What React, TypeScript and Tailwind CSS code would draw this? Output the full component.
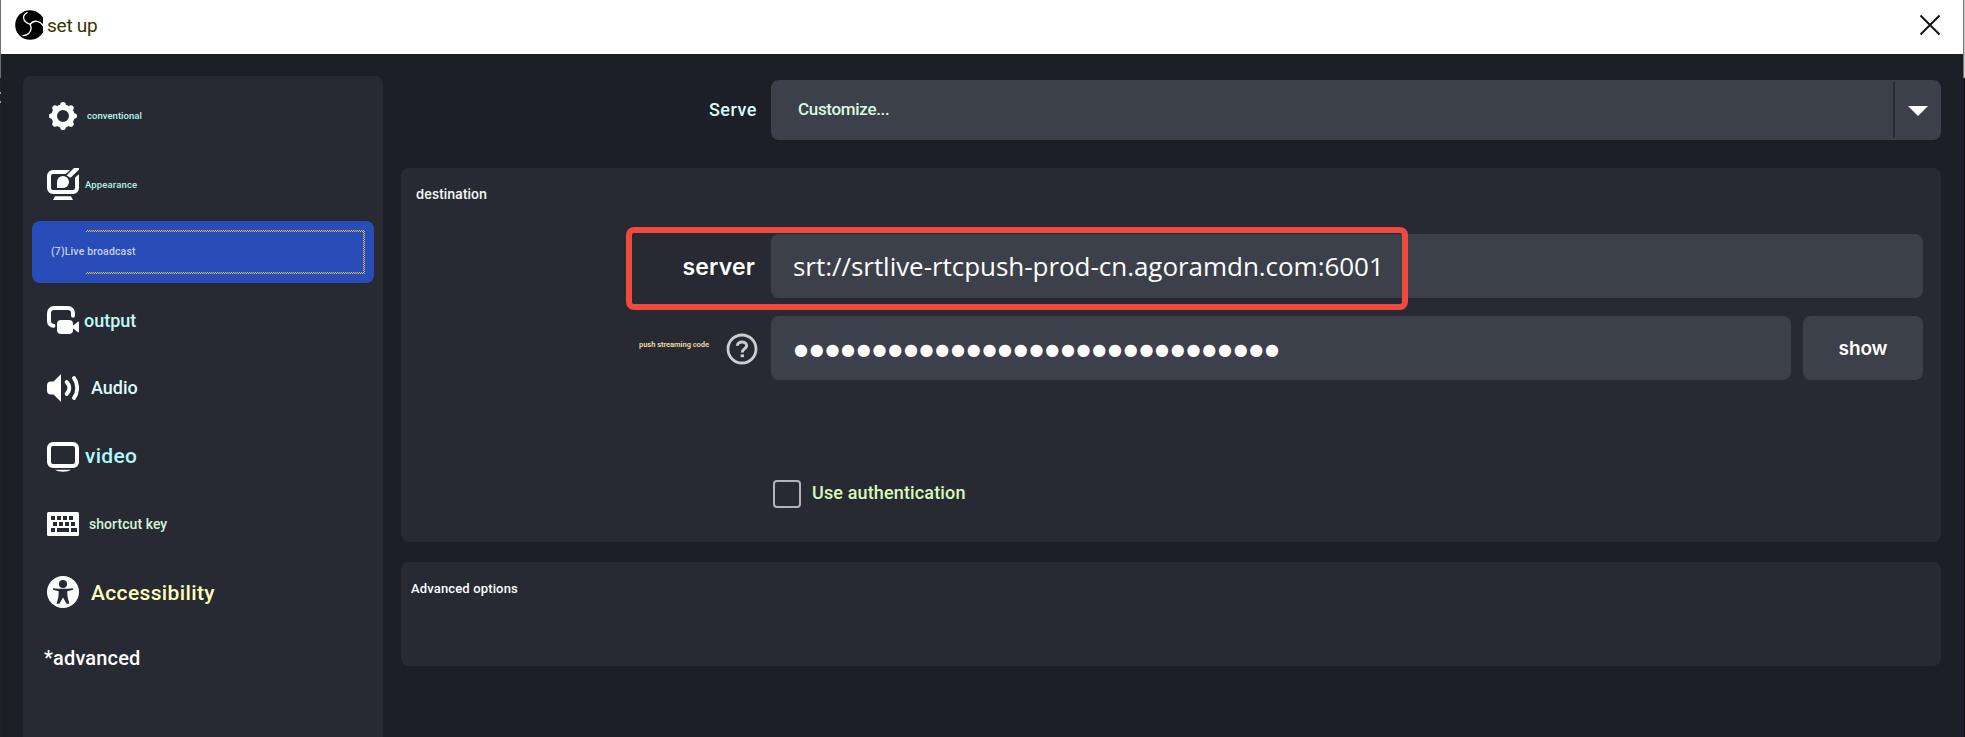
import type { ReactNode } from "react";
import clsx from "clsx";

const ROBOTO = "font-['Roboto','Liberation_Sans',sans-serif]";
const INTER = "font-['Inter','Liberation_Sans',sans-serif]";

function ObsLogo() {
  return (
    <svg width="28" height="30" viewBox="0 0 28 30" className="shrink-0">
      <circle cx="15" cy="15" r="14.8" fill="#000" />
      <g fill="none" stroke="#fff" strokeWidth="1.3" strokeLinecap="round">
        <path d="M12.2 2.6C8.6 4 7.6 7.6 9.4 10.6C10.7 12.8 13 13.6 15.2 14.4" />
        <path d="M15.2 14.4C17 11.8 20 10.8 23 11.6C25.4 12.2 27 13.8 28 15.6" />
        <path d="M15.2 14.4C16.4 17 16.2 20.2 14.4 22.6C12.8 24.6 10.6 25.6 8 25.6" />
      </g>
    </svg>
  );
}

function GearIcon() {
  return (
    <svg width="32" height="32" viewBox="0 0 32 32">
      <g fill="none" stroke="#fff" strokeWidth="5.6">
        <circle cx="16" cy="16" r="8.8" />
        <path
          strokeLinecap="round"
          d="M16 4.8v1M16 27.2v-1M4.8 16h1M27.2 16h-1M8.1 8.1l.7.7M23.9 23.9l-.7-.7M8.1 23.9l.7-.7M23.9 8.1l-.7.7"
        />
      </g>
    </svg>
  );
}

function AppearanceIcon() {
  return (
    <svg width="32" height="32" viewBox="0 0 32 32">
      <rect x="2" y="4" width="28" height="20" rx="4" fill="none" stroke="#fff" strokeWidth="4" />
      <path d="M34-2L19 12" stroke="#272a33" strokeWidth="9" />
      <path d="M27 0H32V1.5L23.6 9.8L19.6 7.4Z" fill="#fff" />
      <path d="M10 20V14a6 6 0 1 1 6 6Z" fill="#fff" />
      <path d="M8 28.2H24L26 32H6Z" fill="#fff" />
    </svg>
  );
}

function OutputIcon() {
  return (
    <svg width="32" height="28" viewBox="0 0 32 28">
      <path
        d="M6.4 19.8A4.6 4.6 0 0 1 2 15.2V7A5 5 0 0 1 7 2H21A5 5 0 0 1 26 7V9.8"
        fill="none"
        stroke="#fff"
        strokeWidth="4"
        strokeLinecap="round"
      />
      <rect x="10" y="14" width="16" height="14" rx="4" fill="#fff" />
      <path d="M25.5 20L31 15.8H32V26.2H31L25.5 22Z" fill="#fff" />
    </svg>
  );
}

function AudioIcon() {
  return (
    <svg width="32" height="28" viewBox="0 0 32 28">
      <path d="M14 0V28L6.6 20.4H4A4 4 0 0 1 0 16.4V11.6A4 4 0 0 1 4 7.6H6.6Z" fill="#fff" />
      <g fill="none" stroke="#fff" strokeWidth="3.8" strokeLinecap="round">
        <path d="M19.6 8C23.2 11.4 23.2 16.6 19.6 20" />
        <path d="M27 4C31.2 9.6 31.2 18.4 27 24" />
      </g>
    </svg>
  );
}

function VideoIcon() {
  return (
    <svg width="32" height="30" viewBox="0 0 32 30" className="mt-0.5">
      <rect x="2" y="2" width="28" height="22" rx="4" fill="none" stroke="#fff" strokeWidth="4" />
      <path d="M8 27.8H24C21 30.4 11 30.4 8 27.8Z" fill="#fff" />
    </svg>
  );
}

function KeyboardIcon() {
  return (
    <svg width="32" height="24" viewBox="0 0 32 24">
      <rect width="32" height="24" rx="1.5" fill="#fff" />
      <path
        fill="#272a33"
        d="M4 4h4v4H4zM10 4h4v4h-4zM16 4h4v4h-4zM22 4h4v4h-4zM6 10h4v4H6zM12 10h4v4h-4zM18 10h4v4h-4zM24 10h4v4h-4zM4 16h4v4H4zM10 16h12v4H10zM24 16h6v4h-6z"
      />
    </svg>
  );
}

function AccessibilityIcon() {
  return (
    <svg width="32" height="32" viewBox="0 0 32 32">
      <circle cx="16" cy="16" r="16" fill="#fff" />
      <g fill="#272a33">
        <circle cx="16" cy="8" r="4" />
        <path d="M6 12.2Q16 13.4 26 12.2V13.8L20.2 15.2L20.6 21L22.4 27.8H19.6L16 21.6L12.4 27.8H9.6L11.4 21L11.8 15.2L6 13.8Z" />
      </g>
    </svg>
  );
}

type NavRow = { label: string; icon: ReactNode; text: string };

const before: NavRow[] = [
  { label: "conventional", icon: <GearIcon />, text: "pl-2 text-[9.5px] tracking-[0.04px] text-[#b4f6f0]" },
  { label: "Appearance", icon: <AppearanceIcon />, text: "pl-1.5 pt-0.5 text-[9.5px] tracking-[0.15px] text-[#b4f0ea]" },
];

const after: NavRow[] = [
  { label: "output", icon: <OutputIcon />, text: "pl-[5px] pt-0.5 text-[18px] text-[#c2fbf6]" },
  { label: "Audio", icon: <AudioIcon />, text: "pl-3 text-[18px] text-[#dcfbf8]" },
  { label: "video", icon: <VideoIcon />, text: "pl-1.5 text-[21px] tracking-[0.29px] text-[#b0fafa]" },
  { label: "shortcut key", icon: <KeyboardIcon />, text: "pl-2.5 text-[14px] tracking-[0.06px] text-[#d2f4d4]" },
  { label: "Accessibility", icon: <AccessibilityIcon />, text: "pl-3 pt-0.5 text-[21px] tracking-[0.36px] text-[#ffffbc]" },
];

function NavItem({ label, icon, text }: NavRow) {
  return (
    <li className="flex h-[68px] items-center pl-[15px]">
      <span className="flex w-8 justify-center">{icon}</span>
      <span className={clsx("font-medium leading-none whitespace-nowrap", text)}>{label}</span>
    </li>
  );
}

function Sidebar() {
  return (
    <nav className="w-[360px] shrink-0 rounded-t-lg bg-[#272a33] px-[9px] pt-1.5">
      <ul>
        {before.map((row) => (
          <NavItem key={row.label} {...row} />
        ))}
        <li className="flex h-[68px] items-center">
          <div className="relative flex h-[62px] w-full items-center rounded-lg bg-[#284cb8] pl-[19px]">
            <div className="absolute top-[9px] right-[9px] bottom-[9px] left-[54px] bg-[repeating-conic-gradient(#e6bd3c_0_25%,#284cb8_0_50%)] bg-[length:2px_2px] py-0.5 pr-0.5">
              <div className="h-full w-full bg-[#284cb8]" />
            </div>
            <span className="relative text-[10.5px] leading-none font-medium tracking-[0.15px] text-[#c6d0f2]">
              (7)Live broadcast
            </span>
          </div>
        </li>
        {after.map((row) => (
          <NavItem key={row.label} {...row} />
        ))}
        <li className="flex h-[68px] items-center pb-1 pl-3 text-[20px] leading-none font-medium tracking-[0.16px] text-white">
          *advanced
        </li>
      </ul>
    </nav>
  );
}

function ServiceRow() {
  return (
    <div className="flex h-[60px] items-center">
      <div className="w-[370px] shrink-0 pr-3.5 text-right text-[18px] leading-none font-medium tracking-[0.5px] text-[#d8fbfb]">
        Serve
      </div>
      <div className="flex h-full flex-1 items-center rounded-lg bg-[#3c404b] py-0.5">
        <span className="flex-1 pb-0.5 pl-[27px] text-[17px] leading-none font-medium tracking-[-0.32px] text-[#dbf9de]">
          Customize...
        </span>
        <div className="flex h-full w-12 items-center justify-center border-l-2 border-[#272a33] pt-0.5">
          <svg width="20" height="10" viewBox="0 0 20 10">
            <path d="M0 0H20L10 10Z" fill="#fff" />
          </svg>
        </div>
      </div>
    </div>
  );
}

function HelpIcon() {
  return (
    <svg width="32" height="32" viewBox="0 0 32 32" className="mt-0.5 shrink-0">
      <g fill="none" stroke="#cdcdcf">
        <circle cx="16" cy="16" r="14" strokeWidth="2.8" />
        <path d="M11.4 12.8C11.4 7.8 20.6 7.8 20.6 12.8C20.6 15.6 16.3 15.8 16.3 19.4" strokeWidth="3" />
      </g>
      <rect x="14.6" y="21.4" width="3.4" height="2.8" fill="#cdcdcf" />
    </svg>
  );
}

function Destination() {
  return (
    <section className="mt-7 h-[374px] rounded-lg bg-[#272a33] pr-[18px]">
      <h2 className={clsx(INTER, "h-[66px] pt-[19px] pl-[15px] text-[13px] leading-[14px] font-semibold tracking-[0.08px] text-[#f2f5f4]")}>
        destination
      </h2>
      <div className="relative flex h-16 items-center">
        <div className={clsx(INTER, "w-[370px] shrink-0 pt-0.5 pr-4 text-right text-[23px] leading-none font-semibold tracking-[0.15px] text-white")}>
          server
        </div>
        <div className="flex h-full flex-1 items-center rounded-lg bg-[#3c404b] pl-[22px] font-['Open_Sans',sans-serif] text-[26px] leading-none tracking-[-0.04px] whitespace-nowrap text-white">
          srt://srtlive-rtcpush-prod-cn.agoramdn.com:6001
        </div>
        <div className="absolute -top-[7px] left-[225px] h-[83px] w-[782px] rounded-lg border-[6px] border-[#f04a3e]" />
      </div>
      <div className="mt-[18px] flex h-16 items-center">
        <div className="flex w-[370px] shrink-0 items-center justify-end gap-[17px] pr-[13px]">
          <span className="pb-[6px] text-[7.5px] leading-none font-semibold tracking-[-0.03px] text-[#f3dfa2]">
            push streaming code
          </span>
          <HelpIcon />
        </div>
        <div className="flex h-full flex-1 items-center rounded-lg bg-[#3c404b] pt-[3px] pl-[23px] font-['DejaVu_Sans',sans-serif] text-[16px] leading-none tracking-[1.74px] whitespace-nowrap text-white">
          ●●●●●●●●●●●●●●●●●●●●●●●●●●●●●●●
        </div>
        <button className={clsx(INTER, "ml-3 h-full w-[120px] rounded-lg bg-[#3c404b] text-[19px] leading-none font-semibold tracking-[-0.12px] text-white")}>
          show
        </button>
      </div>
      <label className="mt-[100px] flex h-7 items-center pl-[372px]">
        <span className="size-7 rounded-[4px] border-2 border-[#b4b4b8]" />
        <span className="pb-0.5 pl-[11px] text-[18px] leading-none font-medium tracking-[0.14px] text-[#d9f9ba]">Use authentication</span>
      </label>
    </section>
  );
}

export default function App() {
  return (
    <div className={clsx(ROBOTO, "flex h-[737px] w-[1965px] overflow-hidden bg-[#1d1f26]")}>
      <div className="w-px shrink-0 bg-[#1f2326]">
        <div className="h-[78px] bg-[#707070]" />
        <div className="mt-3.5 h-0.5 bg-[#a0a0a0]" />
        <div className="mt-[7px] h-0.5 bg-[#a0a0a0]" />
      </div>
      <main className="flex min-w-0 flex-1 flex-col">
        <header className="flex h-[54px] shrink-0 items-center bg-white pr-[22px] pl-3.5">
          <div className="pb-1">
            <ObsLogo />
          </div>
          <h1 className="flex-1 pb-1 pl-1 text-[19px] leading-none tracking-[-0.25px] text-[#363600]">set up</h1>
          <svg width="22" height="22" viewBox="0 0 22 22" className="mb-1">
            <path d="M1.5 1.5L20.5 20.5M20.5 1.5L1.5 20.5" stroke="#111" strokeWidth="1.9" />
          </svg>
        </header>
        <div className="flex min-h-0 flex-1 pt-[22px] pr-[22px] pl-[22px]">
          <Sidebar />
          <div className="ml-[18px] flex-1 pt-1">
            <ServiceRow />
            <Destination />
            <section className="mt-5 h-[104px] rounded-lg bg-[#272a33] pt-5 pl-2.5 text-[13px] leading-[14px] font-medium tracking-[0.15px] text-white">
              Advanced options
            </section>
          </div>
        </div>
      </main>
      <div className="w-px shrink-0 bg-[#1d1f26]">
        <div className="h-[78px] bg-[#77797a]" />
      </div>
      <div className="w-px shrink-0 bg-[#101010]">
        <div className="h-[78px] bg-[#c9c9c6]" />
      </div>
    </div>
  );
}
